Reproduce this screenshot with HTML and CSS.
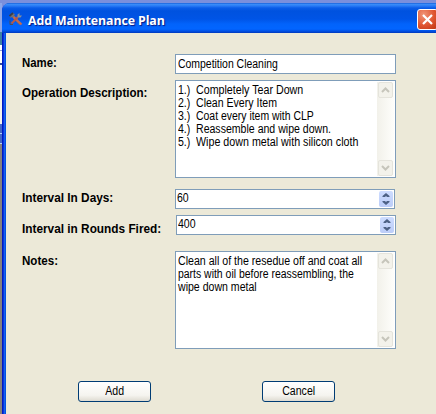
FILE: index.html
```html
<!DOCTYPE html>
<html lang="en">
<head>
<meta charset="utf-8">
<title>Add Maintenance Plan</title>
<link rel="stylesheet" href="styles.css">
</head>
<body>
<div class="desktop">
  <div class="backdrop"><i class="b1"></i><i class="b2"></i><i class="b3"></i><i class="b4"></i><i class="b5"></i><i class="b6"></i></div>
  <main class="window">
    <header class="titlebar">
      <svg class="app-icon" width="14" height="14" viewBox="0 0 14 14">
        <path d="M1 3.500 4 1l2 1.500-1 1 7 8-1.500 1.500-7.500-8-1.500 1z" fill="#77716f"/>
        <path d="M4.500 5 12.500 12.500" stroke="#c9694c" stroke-width="2.200"/>
        <path d="M9 5 2.500 11.500" stroke="#b25a4c" stroke-width="2.200"/>
        <path d="M8.500 5.500V2.500L10.500 1v2.500H13L11.500 5.500z" fill="#8c8f94"/>
        <path d="M0.500 4 4 1" stroke="#3c3f48" stroke-width="1.800"/>
        <path d="M1 8.500v4h3" stroke="#4b4d58" fill="none"/>
      </svg>
      <h1 class="title">Add Maintenance Plan</h1>
      <button class="close" aria-label="Close"><svg width="19" height="19" viewBox="0 0 19 19"><path d="M5 5 14 14M14 5 5 14" stroke="#fff" stroke-width="2.200"/></svg></button>
    </header>
    <form class="form">
      <div class="row name-row">
        <label class="label"><span class="t l-name">Name:</span></label>
        <div class="box line"><span class="t v-name">Competition Cleaning</span></div>
      </div>
      <div class="row desc-row">
        <label class="label"><span class="t l-desc">Operation Description:</span></label>
        <div class="box area">
          <div class="lines">
            <div class="step"><span class="t">1.)</span><span class="t s1">Completely Tear Down</span></div>
            <div class="step"><span class="t">2.)</span><span class="t s2">Clean Every Item</span></div>
            <div class="step"><span class="t">3.)</span><span class="t s3">Coat every item with CLP</span></div>
            <div class="step"><span class="t">4.)</span><span class="t s4">Reassemble and wipe down.</span></div>
            <div class="step"><span class="t">5.)</span><span class="t s5">Wipe down metal with silicon cloth</span></div>
          </div>
          <div class="scroll">
            <i class="arrow"><svg width="9" height="6" viewBox="0 0 9 6"><path d="M1 5 4.500 1.500 8 5"/></svg></i>
            <i class="arrow"><svg width="9" height="6" viewBox="0 0 9 6"><path d="M1 1 4.500 4.500 8 1"/></svg></i>
          </div>
        </div>
      </div>
      <div class="row days-row">
        <label class="label"><span class="t l-days">Interval In Days:</span></label>
        <div class="box spin"><span class="t v-num">60</span><i class="spinner"><svg width="14" height="16" viewBox="0 0 14 16"><path d="M3.500 6V5L7 2l3.500 3v1H8L7 5 6 6zM3.500 10v1L7 14l3.500-3v-1H8l-1 1-1-1z"/></svg></i></div>
      </div>
      <div class="row rounds-row">
        <label class="label"><span class="t l-rounds">Interval in Rounds Fired:</span></label>
        <div class="box spin"><span class="t v-num">400</span><i class="spinner"><svg width="14" height="16" viewBox="0 0 14 16"><path d="M3.500 6V5L7 2l3.500 3v1H8L7 5 6 6zM3.500 10v1L7 14l3.500-3v-1H8l-1 1-1-1z"/></svg></i></div>
      </div>
      <div class="row notes-row">
        <label class="label"><span class="t l-notes">Notes:</span></label>
        <div class="box area">
          <div class="lines">
            <div><span class="t n1">Clean all of the resedue off and coat all</span></div>
            <div><span class="t n2">parts with oil before reassembling, the</span></div>
            <div><span class="t n3">wipe down metal</span></div>
          </div>
          <div class="scroll">
            <i class="arrow"><svg width="9" height="6" viewBox="0 0 9 6"><path d="M1 5 4.500 1.500 8 5"/></svg></i>
            <i class="arrow"><svg width="9" height="6" viewBox="0 0 9 6"><path d="M1 1 4.500 4.500 8 1"/></svg></i>
          </div>
        </div>
      </div>
      <div class="actions">
        <button type="button" class="btn"><span class="t v-add">Add</span></button>
        <button type="button" class="btn"><span class="t v-cancel">Cancel</span></button>
      </div>
    </form>
  </main>
</div>
</body>
</html>
```

FILE: styles.css
```css
* { box-sizing: border-box; }
body { margin: 0; font: 12px/13px "Liberation Sans", Arial, sans-serif; color: #000; }
i { display: block; }
.desktop { width: 436px; height: 414px; overflow: hidden; display: grid; grid-template-columns: 2px 434px; padding-top: 3px; background: #7b8fdc; }
.backdrop { display: flex; flex-direction: column; }
.b1 { height: 29px; background: #8ea6e8; }
.b2 { height: 13px; background: #3f82a6; }
.b3 { height: 35px; background: linear-gradient(#fff 0 5px, #8aa0dc 5px 6px, #fff 6px 18px, #32479a 18px 20px, #fff 20px); }
.b4 { height: 44px; background: #f3f2ec; }
.b5 { height: 20px; background: repeating-linear-gradient(#4467c6 0 9px, #b8d0fa 9px 10px); }
.b6 { flex: 1; background: #85817f; }
.window { height: 411px; display: flex; flex-direction: column; border-radius: 8px 0 0 0; overflow: hidden; background: linear-gradient(90deg, #0019c2 0 1px, #0834dc 1px 2px, #1661ef 2px 3px, #0052e2 3px); padding-left: 4px; }
.titlebar { height: 30px; flex: none; margin-left: -4px; padding: 3px 0 0 7px; display: flex; align-items: center; background: linear-gradient(#0a50d0 0, #3d90fa 1px, #2879f5 3px, #0a5ce8 5px, #0052df 8px, #0054e6 16px, #0263fb 21px, #0265ff 26px, #0052e6 28px, #0038bc 30px); }
.app-icon { margin-top: -1px; }
.title { margin: 0 0 0 5px; font: bold 13px/18px "Open Sans", sans-serif; color: #fff; text-shadow: 1px 1px 1px #0a1883; white-space: nowrap; transform: scaleX(.95); transform-origin: 0 50%; letter-spacing: -.1px; }
.close { margin-left: auto; width: 21px; height: 21px; padding: 0; border: 1px solid #fff; border-radius: 3px; background: radial-gradient(circle at 30% 25%, #f09577, #df5430 55%, #bd3310); margin-right: -2px; }
.close svg { display: block; }
.form { flex: 1; background: #ece9d8; padding: 21px 0 0 16px; }
.row { display: grid; grid-template-columns: 153px 221px; }
.t { display: inline-block; white-space: pre; transform-origin: 0 50%; transform: scaleX(.88); }
.label { font-weight: bold; }
.label .t { transform: scaleX(.965); }
.label .l-days, .label .l-rounds { transform: scaleX(.985); }
.label .l-name { transform: scaleX(.95); }
.v-name { transform: scaleX(.87); }
.s1, .n2 { transform: scaleX(.882); }
.s1 { transform: scaleX(.89); }
.s3 { transform: scaleX(.87); }
.s5 { transform: scaleX(.892); }
.n1 { transform: scaleX(.885); }
.n2 { transform: scaleX(.87); }
.box { border: 1px solid #7f9db9; background: #fff; }
.name-row .label { padding-top: 3px; }
.line { height: 20px; padding: 3px 0 0 2px; }
.desc-row { margin-top: 6px; }
.desc-row .label { padding-top: 7px; }
.area { height: 98px; display: flex; justify-content: space-between; }
.lines { padding: 3px 0 0 2px; width: 200px; }
.lines > div { height: 13px; white-space: nowrap; }
.step { display: grid; grid-template-columns: 18px 1fr; justify-items: start; }
.scroll { width: 17px; margin: 1px 1px 1px 0; flex: none; display: flex; flex-direction: column; justify-content: space-between; background: linear-gradient(90deg, #f2f1ea, #fefefb); }
.arrow { width: 15px; height: 16px; margin: 0 1px; border: 1px solid #e5e4dc; border-radius: 2px; background: #f3f2eb; display: grid; place-items: center; }
.arrow path { fill: none; stroke: #c6c5bb; stroke-width: 2; }
.days-row { margin-top: 11px; }
.days-row .label { padding-top: 3px; }
.spin { height: 20px; width: 220px; display: flex; justify-content: space-between; padding: 2px 1px 0 1px; }
.spinner { width: 14px; height: 16px; margin-top: -1px; border-radius: 2px; background: linear-gradient(#cddcff, #bccdf8); }
.spinner svg { display: block; }
.spinner path { fill: #4d6185; }
.rounds-row { margin-top: 6px; }
.rounds-row .label { padding-top: 8px; }
.rounds-row .spin { margin-left: 1px; }
.notes-row { margin-top: 15px; }
.notes-row .label { padding-top: 4px; }
.actions { display: flex; gap: 111px; margin: 32px 0 0 56px; }
.btn { width: 73px; height: 21px; padding: 0; border: 1px solid #003c74; border-radius: 3px; background: linear-gradient(#fff, #f5f4ef 70%, #dedbd1); font: inherit; color: #000; }
.btn .t { transform-origin: 50% 50%; }
```
